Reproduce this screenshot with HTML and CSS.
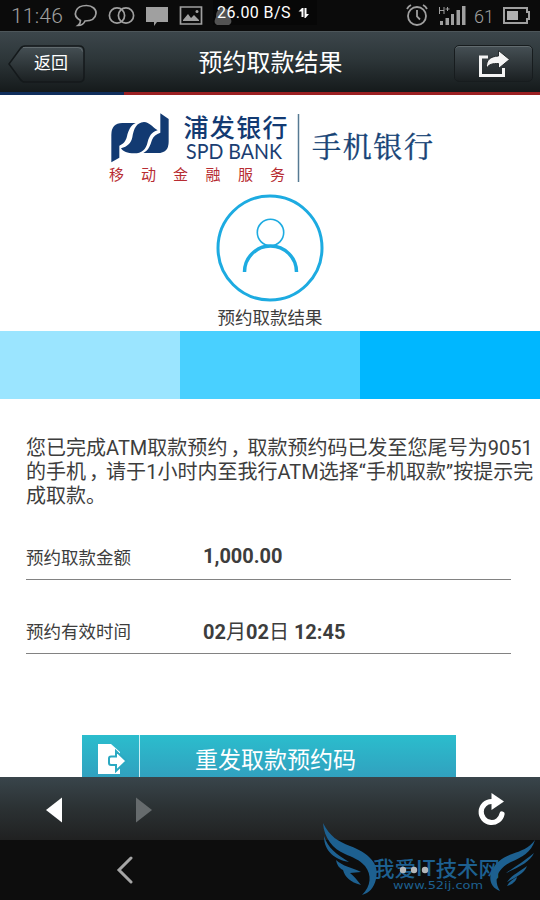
FILE: index.html
```html
<!DOCTYPE html>
<html lang="zh-CN">
<head>
<meta charset="utf-8">
<title>预约取款结果</title>
<link rel="stylesheet" href="styles.css">
</head>
<body>
<div class="status">
  <span class="clock">11:46</span>
  <svg class="status-icons" width="170" height="31" viewBox="70 0 170 31" fill="none" stroke="#a0a0a0" stroke-width="1.7">
    <path d="M78 25.500c2-1.500 2.500-3 2.500-5C76 18 74.500 14.500 76 11c1.500-4 6-5.500 10.500-5.500 6 0 10 4 9.500 8-.5 5-5 7.500-11 7.500-1 2.500-4 4.500-7 4.500z"/>
    <circle cx="117" cy="15.500" r="7.600"/><circle cx="126" cy="15.500" r="7.600"/>
    <path d="M146 7h22v15h-11l-3 4v-4h-8z" fill="#a0a0a0" stroke="none"/>
    <path d="M180.500 7h21v17h-21z"/>
    <path d="M183 21v-1l5-6 3 4 3-3 5 5v1z" fill="#a0a0a0" stroke="none"/><circle cx="197" cy="11.500" r="1.500" fill="#a0a0a0" stroke="none"/>
    <path d="M217 25c-3-2-3-4-1-8 0-5 2-9 7-9s7 4 7 9c2 4 2 6-1 8z" fill="#777" stroke="none"/>
  </svg>
  <div class="speed"><span>26.00 B/S</span>
    <svg width="12" height="14" viewBox="0 0 12 14"><path d="M0.500 5.500 4 2h1.500v9h-2V5.500zM6.500 2h2v6H11L7.500 12h-1z" fill="#fff"/></svg>
  </div>
  <svg class="status-right" width="70" height="31" viewBox="400 0 70 31" fill="none" stroke="#a0a0a0" stroke-width="1.800">
    <circle cx="417" cy="16" r="9"/><path d="M417 10v6.500l3 3M407 9c1-2 2-3 4-4M423 5c2 1 3 2 4 4"/>
    <g fill="#a0a0a0" stroke="none"><path d="M440 21h3v4h-3zM445.500 18h3.500v7h-3.500zM451 14h3v11h-3zM456.500 10h3.500v15h-3.500zM462 6h3.500v19H462z"/></g>
    <path d="M439.500 7v7M444 7v7M439.500 10.500h4.500M445.500 9h4M447.500 7v4" stroke-width="1"/>
  </svg>
  <span class="percent">61</span>
  <svg class="battery" width="28" height="31" viewBox="0 0 28 31"><path d="M1 8h23v4h2v7h-2v4H1z" fill="none" stroke="#a0a0a0" stroke-width="2"/><path d="M4 11h11v9H4z" fill="#b0b0b0"/></svg>
</div>
<header class="header">
  <div class="back">
    <svg class="back-shape" width="80" height="40" viewBox="0 0 80 40"><defs><linearGradient id="b" x2="0" y2="1"><stop stop-color="#465055"/><stop offset=".5" stop-color="#30383b"/><stop offset="1" stop-color="#1b2022"/></linearGradient></defs><path d="M2 20 13 5q2-3 5-3h54q5 0 5 5v26q0 5-5 5H18q-3 0-5-3z" fill="url(#b)" stroke="#14191b" stroke-width="1.500"/><path d="M16 3.500h55q4 0 4.500 4" fill="none" stroke="#697276" stroke-width=".8"/></svg>
    <span>返回</span>
  </div>
  <h1>预约取款结果</h1>
  <div class="share"><svg width="34" height="28" viewBox="0 0 34 28"><path d="M11 7H3.500v18.500h23V18" fill="none" stroke="#f4f4f4" stroke-width="3"/><path d="M9.500 18C9 10 13 6.500 21.500 6V.5l11 9-11 9v-5c-6 0-9 .5-12 4.500z" fill="#f4f4f4" stroke="#252b2d" stroke-width="1"/></svg></div>
</header>
<div class="stripe"><i></i></div>
<main class="page">
  <svg class="brand" width="340" height="80" viewBox="105 107 340 80">
    <g fill="#123a72" transform="translate(105 107) scale(.3333)">
      <path d="M19 166V84Q19 48 52 48H92C76 55 70 72 66 88C62 104 54 112 43 116V152Z"/>
      <path d="M48 124C68 119 78 109 82 91C86 65 94 47 117 45C134 46 142 60 158 70C139 75 133 88 128 105C123 128 110 139 88 139C66 139 55 134 48 124Z"/>
      <path d="M166 19L191 36V104Q191 138 158 138H115C132 129 136 114 141 99C145 87 154 81 166 77Z"/>
    </g>
    <text class="brand-cn" x="183.500" y="137" textLength="104">浦发银行</text>
    <text class="brand-en" x="186" y="159" textLength="96" lengthAdjust="spacingAndGlyphs">SPD BANK</text>
    <text class="brand-sub" y="180" x="109 141 173 205.500 238 270">移动金融服务</text>
    <path d="M298.500 114v68" stroke="#567a93" stroke-width="1.500"/>
    <text class="brand-mobile" x="312" y="158" textLength="121">手机银行</text>
  </svg>
  <svg class="avatar" width="108" height="108" viewBox="0 0 108 108" fill="none" stroke="#1dabe1"><circle cx="54" cy="54" r="52" stroke-width="3"/><circle cx="54.500" cy="38.500" r="13.200" stroke-width="1.600"/><path d="M28.500 78a26 26 0 0 1 52 0" stroke-width="3.500"/></svg>
  <div class="caption">预约取款结果</div>
  <div class="steps"><i class="s1"></i><i class="s2"></i><i class="s3"></i></div>
  <p class="message">您已完成ATM取款预约<span class="comma">，</span>取款预约码已发至您尾号为9051<br>的手机<span class="comma">，</span>请于1小时内至我行ATM选择“手机取款”按提示完<br>成取款。</p>
  <div class="row"><span class="label">预约取款金额</span><b>1,000.00</b></div>
  <div class="row"><span class="label">预约有效时间</span><b>02<span class="cn">月</span>02<span class="cn">日</span> 12:45</b></div>
  <div class="resend">
    <div class="resend-icon"><svg width="32" height="32" viewBox="0 0 32 32"><path d="M2 1h13l9 8v22H2z" fill="#fff"/><path d="M15 13.500h5V8l10.500 10L20 28v-6h-5q-2 0-2-2v-4.500q0-2 2-2z" fill="#fff" stroke="#2ba9c2" stroke-width="2"/></svg></div>
    <span>重发取款预约码</span>
  </div>
</main>
<div class="toolbar">
  <svg width="16" height="26" viewBox="0 0 16 26"><path d="M0 13 16 .5v25z" fill="#fff"/></svg>
  <svg class="forward" width="16" height="26" viewBox="0 0 16 26"><path d="M16 13 0 .5v25z" fill="#666b6d"/></svg>
  <svg class="reload" width="28" height="34" viewBox="0 0 28 34"><path d="M16 9.500h-2.500A10.500 10.500 0 1 0 24 22" fill="none" stroke="#fff" stroke-width="5.200" stroke-linecap="round"/><path d="M13.500 1 26 9.500 13.500 18z" fill="#fff"/></svg>
</div>
<nav class="nav">
  <svg width="18" height="28" viewBox="0 0 18 28"><path d="M15 2 3 14l12 12" fill="none" stroke="#a5a5a5" stroke-width="3" stroke-linecap="round"/></svg>
</nav>
<svg class="watermark" width="230" height="82" viewBox="310 818 230 82">
  <g fill="#1d6090">
    <path d="M323 823c7 14 15 18 27 23 18 7 30 17 26 33-2 9-7 14-14 16 9-9 10-20 3-29-5-6-13-9-20-12-12-5-21-16-22-31z"/>
    <path d="M324 836c4 12 12 18 25 26-13-2-25-10-25-26zM336 860c6 6 17 8 25 12l-11 1c4 3 7 7 11 12-11-3-16-8-18-15-4-2-6-5-7-10z"/>
    <path d="M535 840c-4 13-13 17-24 22-14 7-18 18-11 29-9-3-12-12-8-20 3-8 10-13 20-17 9-3 17-6 23-14z"/>
    <path d="M534 853c-4 9-15 14-28 20 10-7 17-11 28-20zM527 866c-3 8-11 11-20 16 5-7 12-10 20-16zM517 877c-1 5-6 8-10 9 2-4 5-6 10-9z"/>
  </g>
  <text class="mark-title" x="373" y="876" textLength="127" lengthAdjust="spacingAndGlyphs">我爱IT技术网</text>
  <text class="mark-url" x="393" y="889" textLength="90" lengthAdjust="spacingAndGlyphs">www.52ij.com</text>
  <g fill="#b5b8ba"><circle cx="403" cy="870" r="3.200"/><circle cx="414" cy="870" r="3.200"/><circle cx="425" cy="870" r="3.200"/></g>
</svg>
</body>
</html>
```
FILE: styles.css
```css
* { box-sizing: border-box; }
body {
  margin: 0; width: 540px; height: 900px; overflow: hidden; position: relative;
  display: flex; flex-direction: column; background: #fff; color: #3d3d3d;
  font-family: Roboto, "Noto Sans CJK SC", sans-serif;
}
svg { display: block; flex: none; }
.status { height: 31px; flex: none; display: flex; align-items: center; background: #0b0b0b; color: #a0a0a0; position: relative; }
.clock { width: 59px; margin-left: 11px; padding-top: 2px; font-size: 21px; line-height: 29px; font-weight: 300; letter-spacing: .2px; white-space: nowrap; }
.speed { position: absolute; left: 213px; top: 0; width: 104px; height: 25px; padding-left: 4px; background: rgba(0, 0, 0, .3); color: #fff; font-size: 16px; letter-spacing: .4px; display: flex; align-items: center; gap: 7px; white-space: nowrap; }
.status-right { margin-left: 160px; }
.percent { width: 32px; padding: 2px 0 0 4px; font-size: 18px; font-weight: 300; }
.battery { margin-left: 1px; }
.header { height: 61px; flex: none; display: flex; align-items: center; justify-content: space-between; padding: 3px 7px 0; background: linear-gradient(#3c464b, #2d3639 45%, #151a1b); border-top: 1px solid #4d565a; color: #fff; }
.back { width: 80px; height: 40px; display: grid; }
.back > * { grid-area: 1 / 1; }
.back span { z-index: 1; padding-left: 27px; font-size: 17px; line-height: 38px; }
h1 { margin: 0; font-size: 24px; line-height: 36px; font-weight: 400; padding-bottom: 1px; }
.share { width: 79px; height: 37px; display: flex; justify-content: center; align-items: center; border: 1.5px solid #171c1e; border-radius: 5px; background: linear-gradient(#465055, #1b2022); box-shadow: inset 0 1px #626b6f; }
.stripe { height: 3px; flex: none; background: #9b2022; }
.stripe i { display: block; width: 124px; height: 3px; background: #102e5c; }
.page { height: 682px; flex: none; overflow: hidden; padding-top: 12px; }
.brand { margin-left: 105px; }
.brand text { font-family: "Noto Sans CJK SC", sans-serif; }
.brand .brand-cn { font-size: 25px; font-weight: 500; fill: #123a72; }
.brand .brand-en { font-family: Lato, sans-serif; font-size: 21px; fill: #1b3e72; }
.brand .brand-sub { font-size: 15px; fill: #b72c32; }
.brand .brand-mobile { font-family: "Noto Serif CJK SC", "Noto Sans CJK SC", serif; font-size: 29px; fill: #174476; stroke: #174476; stroke-width: .4px; }
.avatar { margin: 7px 0 0 216px; }
.caption { height: 29px; padding-top: 4px; text-align: center; font-size: 17.5px; line-height: 24px; }
.steps { display: grid; grid-template-columns: repeat(3, 1fr); height: 68px; }
.s1 { background: #9be5ff; }
.s2 { background: #49d0ff; }
.s3 { background: #00b7ff; }
.message { margin: 37px 0 0 26px; height: 72px; font-size: 20px; line-height: 24px; letter-spacing: .02px; white-space: nowrap; }
.comma { display: inline-block; transform: translateX(3px); }
.row { width: 485px; height: 50px; margin-left: 26px; margin-top: 22px; padding-top: 3px; display: flex; align-items: center; border-bottom: 1.5px solid #828282; }
.row + .row { margin-top: 24px; }
.label { width: 177px; font-size: 17.5px; }
.row b { font-size: 20px; font-weight: 700; }
.cn { font-weight: 400; }
.resend { width: 374px; height: 51px; margin: 81px 0 0 82px; display: flex; align-items: center; background: linear-gradient(#2bbdcd, #329bbc); color: #fff; font-size: 23px; line-height: 50px; }
.resend-icon { width: 58px; height: 51px; padding: 8px 0 0 14px; border-right: 1px solid #c9eff5; }
.resend span { padding-left: 55px; padding-top: 1px; }
.toolbar { height: 63px; flex: none; position: relative; display: flex; align-items: center; padding: 3px 34px 0 46px; background: linear-gradient(#39454b, #2b3133 50%, #202121); }
.forward { margin-left: 74px; }
.reload { margin-left: auto; margin-top: -2px; }
.nav { height: 60px; flex: none; display: flex; align-items: center; padding-left: 116px; background: #0d0d0d; }
.watermark { position: absolute; left: 310px; top: 818px; z-index: 2; }
.mark-title { font: 500 21px "Noto Sans CJK SC", sans-serif; fill: #1d6090; }
.mark-url { font: 11px "DejaVu Sans", sans-serif; fill: #1d6090; }
```
